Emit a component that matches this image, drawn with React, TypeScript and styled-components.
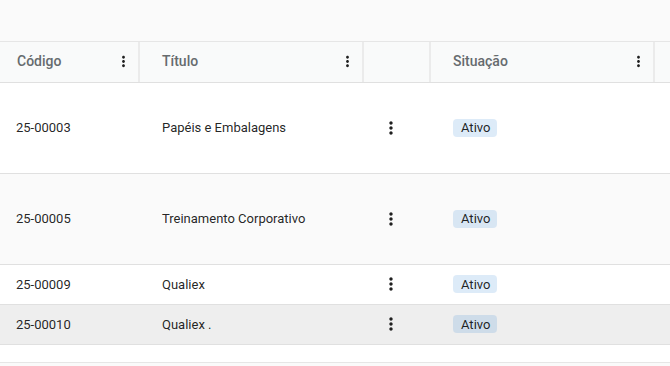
import styled, { createGlobalStyle } from "styled-components";

const GlobalStyle = createGlobalStyle`
  html, body {
    margin: 0;
    padding: 0;
    background: #fafafa;
    font-family: Roboto, "Liberation Sans", Arial, sans-serif;
  }
`;

const COLS = "140px 224px 67px 224px 1fr";

const Page = styled.div`
  width: 670px;
  height: 366px;
  overflow: hidden;
  display: flex;
  flex-direction: column;
  background: #fafafa;
`;

const Toolbar = styled.div`
  height: 41px;
  flex-shrink: 0;
  background: #fafafa;
`;

const Grid = styled.div`
  display: flex;
  flex-direction: column;
  background: #ffffff;
`;

const HeaderRow = styled.div`
  display: grid;
  grid-template-columns: ${COLS};
  height: 40px;
  background: #f9fafa;
  border-top: 1px solid #e6e6e6;
  border-bottom: 1px solid #e0e0e0;
`;

const HeaderCell = styled.div<{ $pad: number; $sep?: boolean }>`
  display: flex;
  align-items: center;
  justify-content: space-between;
  padding: 0 6px 2px ${({ $pad }) => $pad}px;
  border-right: ${({ $sep }) => ($sep ? "2px solid #ebebeb" : "none")};
  font-size: 14px;
  font-weight: 500;
  color: #666b6e;
  min-width: 0;
`;

const Row = styled.div<{ $h: number; $bg: string }>`
  display: grid;
  grid-template-columns: ${COLS};
  height: ${({ $h }) => $h}px;
  background: ${({ $bg }) => $bg};
  border-bottom: 1px solid #e0e0e0;
`;

const Cell = styled.div<{ $pad: number }>`
  display: flex;
  align-items: center;
  padding-left: ${({ $pad }) => $pad}px;
  padding-bottom: 1px;
  font-size: 13px;
  color: rgba(0, 0, 0, 0.87);
  white-space: nowrap;
  overflow: hidden;
`;

const Badge = styled.span`
  display: inline-flex;
  align-items: center;
  height: 18px;
  padding: 0 7px 0 8px;
  border-radius: 4px;
  background: rgba(25, 118, 210, 0.15);
  font-size: 13px;
  color: rgba(0, 0, 0, 0.87);
`;

const Filler = styled.div`
  height: 17px;
  background: #ffffff;
  border-bottom: 1px solid #e6e6e6;
`;

const Footer = styled.div`
  flex: 1;
  background: #fafafa;
`;

const Kebab = ({ size }: { size: number }) => (
  <svg width={size} height={size} viewBox="0 0 24 24" fill="#1f1f1f">
    <path d="M12 8c1.1 0 2-.9 2-2s-.9-2-2-2-2 .9-2 2 .9 2 2 2m0 2c-1.1 0-2 .9-2 2s.9 2 2 2 2-.9 2-2-.9-2-2-2m0 6c-1.1 0-2 .9-2 2s.9 2 2 2 2-.9 2-2-.9-2-2-2" />
  </svg>
);

const rows = [
  { code: "25-00003", title: "Papéis e Embalagens", h: 90, bg: "#ffffff" },
  { code: "25-00005", title: "Treinamento Corporativo", h: 90, bg: "#fafafa" },
  { code: "25-00009", title: "Qualiex", h: 39, bg: "#ffffff" },
  { code: "25-00010", title: "Qualiex .", h: 39, bg: "#eeeeee" },
];

export default function App() {
  return (
    <Page>
      <GlobalStyle />
      <Toolbar />
      <Grid>
        <HeaderRow>
          <HeaderCell $pad={17} $sep>
            Código
            <Kebab size={17} />
          </HeaderCell>
          <HeaderCell $pad={22} $sep>
            Título
            <Kebab size={17} />
          </HeaderCell>
          <HeaderCell $pad={0} $sep />
          <HeaderCell $pad={22} $sep>
            Situação
            <Kebab size={17} />
          </HeaderCell>
          <HeaderCell $pad={0} />
        </HeaderRow>
        {rows.map((r) => (
          <Row key={r.code} $h={r.h} $bg={r.bg}>
            <Cell $pad={16}>{r.code}</Cell>
            <Cell $pad={22}>{r.title}</Cell>
            <Cell $pad={17}>
              <Kebab size={20} />
            </Cell>
            <Cell $pad={22}>
              <Badge>Ativo</Badge>
            </Cell>
            <Cell $pad={0} />
          </Row>
        ))}
        <Filler />
      </Grid>
      <Footer />
    </Page>
  );
}
